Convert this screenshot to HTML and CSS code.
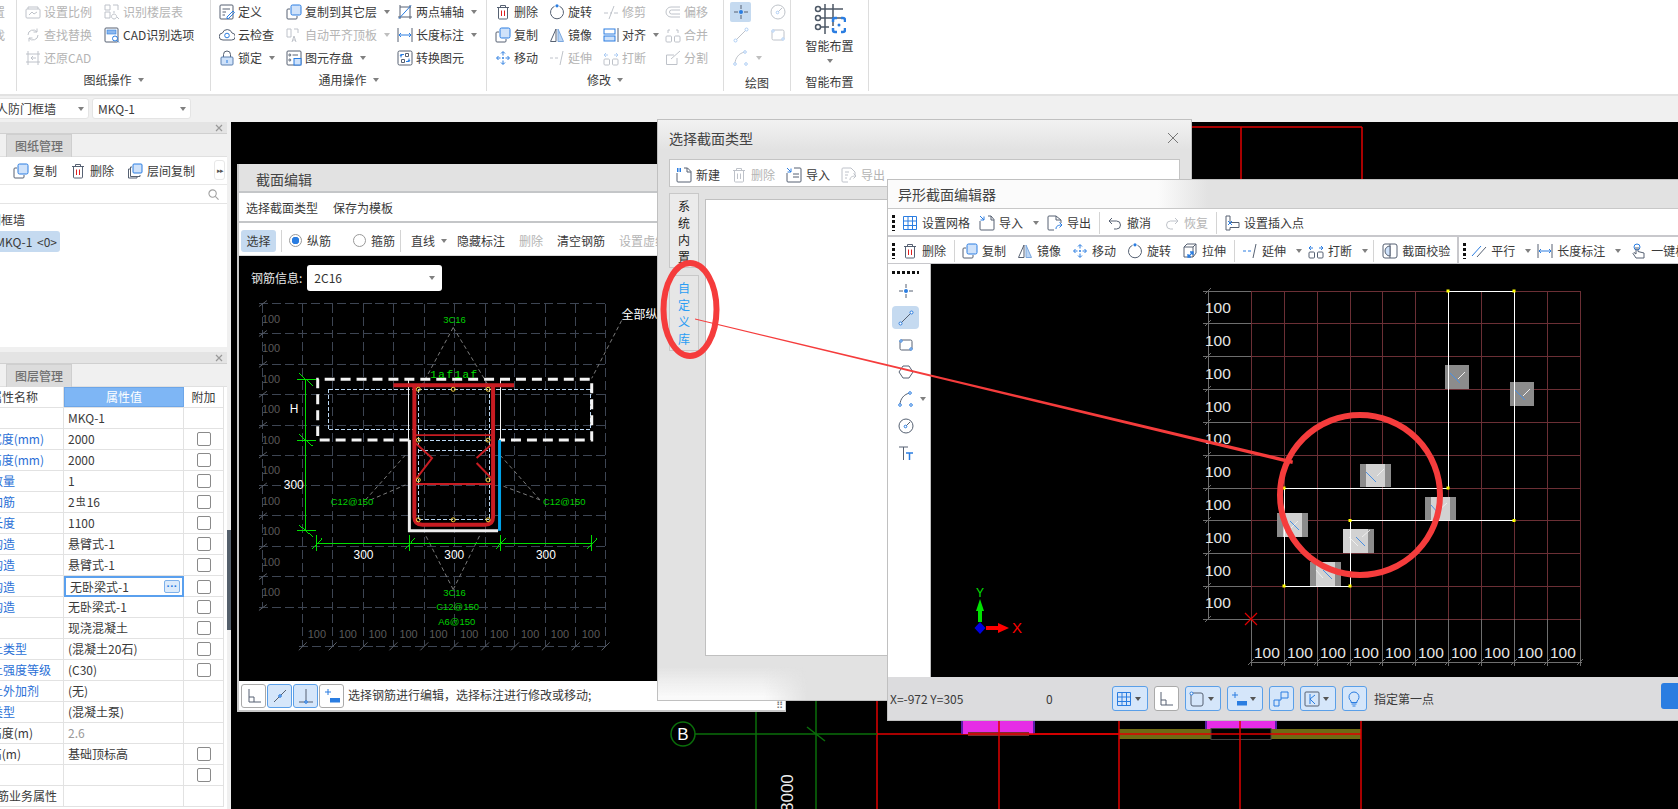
FILE: index.html
```html
<!DOCTYPE html>
<html lang="zh-CN">
<head>
<meta charset="utf-8">
<title>截面编辑</title>
<link rel="stylesheet" href="styles.css">
</head>
<body>
<svg class="defs" width="0" height="0">
  <symbol id="trash" viewBox="0 0 16 16"><path d="M2 3.5h12M5.5 3.5V1.5h5v2M3.5 3.5v10.5a1 1 0 0 0 1 1h7a1 1 0 0 0 1-1V3.500"/><path d="M6.500 6.500v5.500M9.500 6.500v5.500" stroke="#e02020"/></symbol>
  <symbol id="trash-off" viewBox="0 0 16 16"><path d="M2 3.5h12M5.5 3.5V1.5h5v2M3.5 3.5v10.5a1 1 0 0 0 1 1h7a1 1 0 0 0 1-1V3.500M6.500 6.500v5.500M9.500 6.500v5.500"/></symbol>
  <symbol id="copy" viewBox="0 0 16 16"><path d="M4 5H2a1 1 0 0 0-1 1v8a1 1 0 0 0 1 1h8a1 1 0 0 0 1-1v-2"/><rect x="5" y="1" width="10" height="10" rx="1.500" fill="#cfe2fa" stroke="#2a7de1"/></symbol>
  <symbol id="copy2" viewBox="0 0 16 16"><path d="M3 6H1.500v9h8.500v-1.500M5 4H3.500v9.500H13V12"/><rect x="6" y="1" width="9" height="9" rx="1" fill="#cfe2fa" stroke="#2a7de1"/></symbol>
  <symbol id="mirror" viewBox="0 0 16 16"><path d="M7 2 1.500 14.500H7z"/><path d="M9 2l5.500 12.500H9z" fill="#bcd6f5" stroke="#7ba7de"/></symbol>
  <symbol id="move" viewBox="0 0 16 16"><path stroke="#2a7de1" d="M8 2v3.500M8 10.500V14M2 8h3.500M10.500 8H14M6 3.500 8 1.500l2 2M6 12.500l2 2 2-2M3.500 6l-2 2 2 2M12.500 6l2 2-2 2"/><circle cx="8" cy="8" r="1" fill="#2a7de1" stroke="none"/></symbol>
  <symbol id="rot" viewBox="0 0 16 16"><path d="M10.500 2.300a6.500 6.500 0 1 1-5 0"/><circle cx="8" cy="1.800" r="1.600" fill="#2a7de1" stroke="none"/></symbol>
  <symbol id="trim" viewBox="0 0 16 16"><path d="M1 9h4M7 9h2M11 9h4M11 2 6 15"/></symbol>
  <symbol id="offset" viewBox="0 0 16 16"><path d="M15 3H6a5 5 0 0 0 0 10h9M15 6H6.500a2 2 0 0 0 0 4H15"/></symbol>
  <symbol id="align" viewBox="0 0 16 16"><path d="M15 1v14"/><rect x="1" y="2" width="11" height="5" fill="#fff" stroke="#2a7de1"/><rect x="1" y="9" width="11" height="5" fill="#cfe2fa" stroke="#2a7de1"/></symbol>
  <symbol id="merge" viewBox="0 0 16 16"><rect x="1" y="9" width="5.500" height="6" rx="1"/><rect x="9.500" y="9" width="5.500" height="6" rx="1"/><path d="M3 6V3h2M13 6V3h-2"/></symbol>
  <symbol id="extend" viewBox="0 0 16 16"><path d="M14 1l-3 14" stroke="#566172"/><path d="M1 8h3M6 8h3" stroke="#2a7de1"/></symbol>
  <symbol id="extend-off" viewBox="0 0 16 16"><path d="M1 8h3M6 8h3M14 1l-3 14"/></symbol>
  <symbol id="brk" viewBox="0 0 16 16"><rect x="1" y="9" width="5.500" height="6" rx="1"/><rect x="9.500" y="9" width="5.500" height="6" rx="1"/><path stroke="#2a7de1" d="M1 5h4M3 3 1 5l2 2M15 5h-4M13 3l2 2-2 2"/></symbol>
  <symbol id="split" viewBox="0 0 16 16"><path d="M12 8v6.500H1.500V5H9M15 1 6 9"/></symbol>
  <symbol id="def" viewBox="0 0 16 16"><rect x="1" y="1" width="13" height="14" rx="1"/><path d="M3.500 5H11M3.500 8H7M3.500 11H6"/><path stroke="#2a7de1" d="M8 13l6-6 1.500 1.500-6 6H8z"/></symbol>
  <symbol id="cloud" viewBox="0 0 16 16"><path d="M4 13a3.500 3.500 0 0 1-.5-7A5 5 0 0 1 13 6a3.500 3.500 0 0 1-.500 7z"/><circle cx="8" cy="8.500" r="2.300" stroke="#2a7de1"/></symbol>
  <symbol id="lock" viewBox="0 0 16 16"><path d="M4.500 7V4.500a3.500 3.500 0 0 1 7 0V7"/><rect x="2" y="7" width="12" height="8" rx="1" fill="#cfe2fa" stroke="#5a7fae"/><path stroke="#2a7de1" d="M8 10v3"/></symbol>
  <symbol id="autoalign" viewBox="0 0 16 16"><path d="M1 2h4v8H1zM8 2h4v4"/><path d="M6 15l2-6 2 6M7 13h2"/></symbol>
  <symbol id="save" viewBox="0 0 16 16"><rect x="1" y="1" width="14" height="14" rx="1"/><circle cx="3.800" cy="5" r="1"/><circle cx="3.800" cy="10" r="1"/><path d="M6.500 5H12"/><rect x="8" y="8.500" width="7" height="6.500" fill="#cfe2fa" stroke="#2a7de1"/></symbol>
  <symbol id="axis" viewBox="0 0 16 16"><path d="M3 3h11M3 1v14M13 1v14M1 13h14"/><path stroke="#2a7de1" d="M2 14.500 14 1.500"/></symbol>
  <symbol id="dim" viewBox="0 0 16 16"><path d="M1 1v14M15 1v14"/><path stroke="#2a7de1" d="M2 8h12M4 6 2 8l2 2M12 6l2 2-2 2"/></symbol>
  <symbol id="conv" viewBox="0 0 16 16"><rect x="1" y="1" width="14" height="14" rx="1.500"/><path stroke="#2a7de1" d="M7 4.500H4v3M9 11.500h3v-3M3 6l1-1.500L5 6M11 10l1 1.500 1-1.500"/><path d="M8.500 3.500h3v3h-3zM4.500 9.500h3v3h-3z"/></symbol>
  <symbol id="scale" viewBox="0 0 16 16"><rect x="1" y="5" width="14" height="9" rx="1"/><path d="M3 5V3M13 5V3M3 3h10M4 11l3-3 2 2 3-2"/></symbol>
  <symbol id="floor" viewBox="0 0 16 16"><path d="M1 1h5v5H1zM9 1h5v5M1 8h5v6H1zM9 8h2M10 10a2.500 2.500 0 1 0 .1 0M13 13l2 2"/></symbol>
  <symbol id="find" viewBox="0 0 16 16"><path d="M3 8a5 5 0 0 1 9-3M13 8a5 5 0 0 1-9 3M12 1.500V5H8.500M4 14.500V11h3.500"/></symbol>
  <symbol id="cadopt" viewBox="0 0 16 16"><rect x="1" y="1" width="13" height="14" rx="1"/><rect x="3" y="3" width="9" height="4" fill="#8cb8ee" stroke="#2a7de1" stroke-width=".6"/><circle cx="11" cy="11.500" r="2.500" stroke="#2a7de1"/><path stroke="#2a7de1" d="M13 13.500l2 2"/></symbol>
  <symbol id="restore" viewBox="0 0 16 16"><path d="M1 4h14M1 12h14M3 1v14M13 1v14M11 8H6M8 6 6 8l2 2"/></symbol>
  <symbol id="newdoc" viewBox="0 0 16 16"><path d="M8 1h3.500L15 4.500V14a1 1 0 0 1-1 1H2a1 1 0 0 1-1-1V6"/><path d="M11 1v4h4"/><path stroke="#2a7de1" stroke-dasharray="1.500 1" stroke-width="4" d="M1 3h4"/></symbol>
  <symbol id="import" viewBox="0 0 16 16"><path d="M1 6v8a1 1 0 0 0 1 1h12a1 1 0 0 0 1-1V2a1 1 0 0 0-1-1H8M7 7h6M7 10h6"/><path stroke="#2a7de1" d="M1 1l4 4M5 1.500V5H1.500"/></symbol>
  <symbol id="export" viewBox="0 0 16 16"><path d="M7 15H2a1 1 0 0 1-1-1V2a1 1 0 0 1 1-1h8l4 4v3"/><path d="M4 5h4M4 8h3M4 11h2"/><path d="M9 13c0-3 2-4 6-4M12.500 6.500 15 9l-2.500 2.500"/></symbol>
  <symbol id="grid" viewBox="0 0 16 16"><path stroke="#2a7de1" d="M1.500 1.500h13v13h-13zM1.500 6h13M1.500 10.500h13M6 1.500v13M10.500 1.500v13"/></symbol>
  <symbol id="imp2" viewBox="0 0 16 16"><path d="M9 1h3l3 3.500V14a1 1 0 0 1-1 1H2a1 1 0 0 1-1-1V6M12 1v4h3"/><path stroke="#2a7de1" d="M1 1l4 4M5 1.500V5H1.500"/></symbol>
  <symbol id="exp2" viewBox="0 0 16 16"><path d="M7 15H2a1 1 0 0 1-1-1V2a1 1 0 0 1 1-1h7l5 4v3M9 1v4h5"/><path stroke="#2a7de1" d="M9 14c0-3 2-4 6-4M12.500 7.500 15 10l-2.500 2.500"/></symbol>
  <symbol id="undo" viewBox="0 0 16 16"><path d="M5 3 2 6l3 3M2 6h7.500a4 4 0 0 1 0 8H7"/></symbol>
  <symbol id="redo" viewBox="0 0 16 16"><path d="M11 3l3 3-3 3M14 6H6.500a4 4 0 0 0 0 8H9"/></symbol>
  <symbol id="insert" viewBox="0 0 16 16"><path d="M2 1h4v6.500h9v5H6V15H2z"/><path stroke="#2a7de1" d="M4 6l4 4M8 6l-4 4"/></symbol>
  <symbol id="stretch" viewBox="0 0 16 16"><path d="M2 4h9v10H2zM2 4l3-3h9v9l-3 4M11 4l3-3"/><path stroke="#2a7de1" stroke-width="1.300" d="M6 14l5-5M6 11v3h3M11 12V9H8"/></symbol>
  <symbol id="check" viewBox="0 0 16 16"><rect x="1" y="1" width="14" height="14" rx="2"/><path d="M8 1v14"/><path fill="#cfe2fa" d="M8 3a5 5 0 0 0 0 10z"/></symbol>
  <symbol id="para" viewBox="0 0 16 16"><path stroke="#2a7de1" d="M1 13 10 3"/><path d="M6 14l9-10"/></symbol>
  <symbol id="onekey" viewBox="0 0 16 16"><circle cx="6" cy="4" r="3" stroke="#2a7de1"/><path d="M5 4v7l-2-1.500-1 1L5 15h8v-5l-6-1.500V4"/></symbol>
  <symbol id="pt" viewBox="0 0 16 16"><path d="M8 1v4M8 11v4M1 8h4M11 8h4"/><circle cx="8" cy="8" r="2" fill="#2a7de1" stroke="none"/></symbol>
  <symbol id="ln" viewBox="0 0 16 16"><path d="M3 13 13 3"/><circle cx="2.500" cy="13.500" r="1.500" fill="#fff" stroke="#2a7de1"/><circle cx="13.500" cy="2.500" r="1.500" fill="#fff" stroke="#2a7de1"/></symbol>
  <symbol id="rc" viewBox="0 0 16 16"><rect x="2" y="3" width="12" height="10" rx="1.500"/><circle cx="3" cy="4" r="1.200" fill="#fff" stroke="#2a7de1"/><circle cx="13" cy="12" r="1.200" fill="#fff" stroke="#2a7de1"/></symbol>
  <symbol id="hex" viewBox="0 0 16 16"><path d="M5 2h6l4 6-4 6H5L1 8z"/></symbol>
  <symbol id="arc" viewBox="0 0 16 16"><path d="M2 14C2 8 6 3 12 2"/><circle cx="2" cy="14" r="1.300" fill="#fff" stroke="#2a7de1"/><circle cx="12" cy="2" r="1.300" fill="#fff" stroke="#2a7de1"/><circle cx="13" cy="14" r="1.300" fill="#fff" stroke="#2a7de1"/></symbol>
  <symbol id="circ" viewBox="0 0 16 16"><circle cx="8" cy="8" r="7"/><path d="M8 8l4-4"/><circle cx="7.500" cy="8.500" r="1.300" fill="#fff" stroke="#2a7de1"/></symbol>
  <symbol id="tt" viewBox="0 0 16 16"><path d="M1 2h9M5.500 2v13"/><path stroke="#2a7de1" stroke-width="1.500" d="M8 8h7M11.500 8v7"/></symbol>
  <symbol id="corner" viewBox="0 0 16 16"><path d="M3 1v13h12M3 9h5v5"/></symbol>
  <symbol id="slant" viewBox="0 0 16 16"><path d="M2 14 14 2"/><circle cx="8" cy="8" r="1.300" fill="#8cb8ee" stroke="#2a7de1"/></symbol>
  <symbol id="perp" viewBox="0 0 16 16"><path d="M8 1v13M1 14h14"/><circle cx="8" cy="14" r="1.300" fill="#8cb8ee" stroke="#2a7de1"/></symbol>
  <symbol id="plusbar" viewBox="0 0 16 16"><path stroke="#2a7de1" d="M1 4h6M4 1v6"/><rect x="6" y="10" width="10" height="4.500" fill="#2a7de1" stroke="none"/></symbol>
  <symbol id="rectbtn" viewBox="0 0 16 16"><rect x="2" y="2" width="12" height="13" rx="2"/><circle cx="2.500" cy="2.500" r="1.500" fill="#fff" stroke="#2a7de1"/></symbol>
  <symbol id="steps" viewBox="0 0 16 16"><path stroke="#2a7de1" d="M1 9h5v6H1zM8 1h7v6H8zM6 9h2V7"/></symbol>
  <symbol id="boxk" viewBox="0 0 16 16"><rect x="1" y="1" width="14" height="14" rx="1"/><path stroke="#2a7de1" d="M6 3v10M6 8l5-4M6 8l5 5"/></symbol>
  <symbol id="bulb" viewBox="0 0 16 16"><path stroke="#2a7de1" d="M5 10a5 5 0 1 1 6 0v1.500H5zM5.500 13h5M6.500 15h3"/></symbol>
</svg>

<div class="app">
  <header class="ribbon">
    <section class="group g0">
      <div class="stub off">设置</div>
      <div class="stub off">查找</div>
    </section>
    <section class="group gp1">
      <div class="rows">
        <div class="ri off"><svg class="ic"><use href="#scale"/></svg>设置比例</div>
        <div class="ri off"><svg class="ic"><use href="#floor"/></svg>识别楼层表</div>
        <div class="ri off"><svg class="ic"><use href="#find"/></svg>查找替换</div>
        <div class="ri"><svg class="ic"><use href="#cadopt"/></svg>CAD识别选项</div>
        <div class="ri off"><svg class="ic"><use href="#restore"/></svg>还原CAD</div>
      </div>
      <div class="glabel">图纸操作<i class="caret"></i></div>
    </section>
    <section class="group gp2">
      <div class="rows">
        <div class="ri"><svg class="ic"><use href="#def"/></svg>定义</div>
        <div class="ri"><svg class="ic"><use href="#copy"/></svg>复制到其它层<i class="caret"></i></div>
        <div class="ri"><svg class="ic"><use href="#axis"/></svg>两点辅轴<i class="caret"></i></div>
        <div class="ri"><svg class="ic"><use href="#cloud"/></svg>云检查</div>
        <div class="ri off"><svg class="ic"><use href="#autoalign"/></svg>自动平齐顶板<i class="caret"></i></div>
        <div class="ri"><svg class="ic"><use href="#dim"/></svg>长度标注<i class="caret"></i></div>
        <div class="ri"><svg class="ic"><use href="#lock"/></svg>锁定<i class="caret"></i></div>
        <div class="ri"><svg class="ic"><use href="#save"/></svg>图元存盘<i class="caret"></i></div>
        <div class="ri"><svg class="ic"><use href="#conv"/></svg>转换图元</div>
      </div>
      <div class="glabel">通用操作<i class="caret"></i></div>
    </section>
    <section class="group gp3">
      <div class="rows">
        <div class="ri"><svg class="ic"><use href="#trash"/></svg>删除</div>
        <div class="ri"><svg class="ic"><use href="#rot"/></svg>旋转</div>
        <div class="ri off"><svg class="ic"><use href="#trim"/></svg>修剪</div>
        <div class="ri off"><svg class="ic"><use href="#offset"/></svg>偏移</div>
        <div class="ri"><svg class="ic"><use href="#copy"/></svg>复制</div>
        <div class="ri"><svg class="ic"><use href="#mirror"/></svg>镜像</div>
        <div class="ri"><svg class="ic"><use href="#align"/></svg>对齐<i class="caret"></i></div>
        <div class="ri off"><svg class="ic"><use href="#merge"/></svg>合并</div>
        <div class="ri"><svg class="ic"><use href="#move"/></svg>移动</div>
        <div class="ri off"><svg class="ic"><use href="#extend-off"/></svg>延伸</div>
        <div class="ri off"><svg class="ic"><use href="#brk"/></svg>打断</div>
        <div class="ri off"><svg class="ic"><use href="#split"/></svg>分割</div>
      </div>
      <div class="glabel">修改<i class="caret"></i></div>
    </section>
    <section class="group gp4">
      <div class="rows">
        <div class="dbtn on"><svg class="ic"><use href="#pt"/></svg></div>
        <div class="dbtn off"><svg class="ic"><use href="#circ"/></svg></div>
        <div class="dbtn off"><svg class="ic"><use href="#ln"/></svg></div>
        <div class="dbtn off"><svg class="ic"><use href="#rc"/></svg></div>
        <div class="dbtn off"><svg class="ic"><use href="#arc"/></svg><i class="caret"></i></div>
      </div>
      <div class="glabel g-low">绘图</div>
    </section>
    <section class="group gp5">
      <div class="smart">
        <svg class="smart-ic" viewBox="0 0 32 32"><path d="M11 1v30M19 1v22M1 6h28M1 15h28M1 24h14"/><circle cx="4" cy="6" r="2.500" fill="#fff"/><circle cx="4" cy="15" r="2.500" fill="#fff"/><circle cx="4" cy="24" r="2.500" fill="#fff"/><path stroke="#2a7de1" stroke-width="2.500" d="M19 19v-2a2 2 0 0 1 2-2h2M27 15h2a2 2 0 0 1 2 2v2M31 25v2a2 2 0 0 1-2 2h-2M23 29h-2a2 2 0 0 1-2-2v-2"/><circle cx="25" cy="22" r="1.500" fill="#2a7de1" stroke="none"/></svg>
        <span>智能布置</span>
        <i class="caret"></i>
      </div>
      <div class="glabel g-low">智能布置</div>
    </section>
  </header>

  <div class="bar">
    <div class="combo c1"><span>人防门框墙</span><i class="caret"></i></div>
    <div class="combo c2"><span>MKQ-1</span><i class="caret"></i></div>
  </div>

  <main class="main">
    <aside class="side">
      <div class="panel p1">
        <div class="ptitle"><svg class="x" viewBox="0 0 8 8"><path d="M1 1l6 6M7 1 1 7"/></svg></div>
        <div class="tabs"><span class="tab">图纸管理</span></div>
        <div class="ptools">
          <span class="pt"><svg class="ic"><use href="#copy"/></svg>复制</span>
          <span class="pt"><svg class="ic"><use href="#trash"/></svg>删除</span>
          <span class="pt"><svg class="ic"><use href="#copy2"/></svg>层间复制</span>
          <span class="more">▸▸</span>
        </div>
        <div class="search"><svg class="mag" viewBox="0 0 12 12"><circle cx="5" cy="5" r="4"/><path d="M8 8l3.500 3.500"/></svg></div>
        <div class="tree">
          <div class="t1"><span>人防门框墙</span></div>
          <div class="t2"><span>MKQ-1 &lt;0&gt;</span></div>
        </div>
      </div>
      <div class="panel p2">
        <div class="ptitle"><svg class="x" viewBox="0 0 8 8"><path d="M1 1l6 6M7 1 1 7"/></svg></div>
        <div class="tabs"><span class="tab">图层管理</span></div>
        <div class="props">
          <div class="row head"><div class="n"><span class="e38">属性名称</span></div><div class="v">属性值</div><div class="a">附加</div></div>
          <div class="row"><div class="n"></div><div class="v">MKQ-1</div><div class="a"></div></div>
          <div class="row"><div class="n link"><span class="e44">洞口宽度(mm)</span></div><div class="v">2000</div><div class="a"><i class="cb"></i></div></div>
          <div class="row"><div class="n link"><span class="e44">洞口高度(mm)</span></div><div class="v">2000</div><div class="a"><i class="cb"></i></div></div>
          <div class="row"><div class="n link"><span class="e15">数量</span></div><div class="v">1</div><div class="a"><i class="cb"></i></div></div>
          <div class="row"><div class="n link"><span class="e15">加筋</span></div><div class="v">2<small class="steel">虫</small>16</div><div class="a"><i class="cb"></i></div></div>
          <div class="row"><div class="n link"><span class="e15">长度</span></div><div class="v">1100</div><div class="a"><i class="cb"></i></div></div>
          <div class="row"><div class="n link"><span class="e15">构造</span></div><div class="v">悬臂式-1</div><div class="a"><i class="cb"></i></div></div>
          <div class="row"><div class="n link"><span class="e15">构造</span></div><div class="v">悬臂式-1</div><div class="a"><i class="cb"></i></div></div>
          <div class="row"><div class="n link"><span class="e15">构造</span></div><div class="v edit"><span>无卧梁式-1</span><b class="dots">···</b></div><div class="a"><i class="cb"></i></div></div>
          <div class="row"><div class="n link"><span class="e15">构造</span></div><div class="v">无卧梁式-1</div><div class="a"><i class="cb"></i></div></div>
          <div class="row"><div class="n"></div><div class="v">现浇混凝土</div><div class="a"><i class="cb"></i></div></div>
          <div class="row"><div class="n link"><span class="e27">混凝土类型</span></div><div class="v">(混凝土20石)</div><div class="a"><i class="cb"></i></div></div>
          <div class="row"><div class="n link"><span class="e51">混凝土强度等级</span></div><div class="v">(C30)</div><div class="a"><i class="cb"></i></div></div>
          <div class="row"><div class="n link"><span class="e39">混凝土外加剂</span></div><div class="v">(无)</div><div class="a"></div></div>
          <div class="row"><div class="n link"><span class="e15">泵送类型</span></div><div class="v">(混凝土泵)</div><div class="a"></div></div>
          <div class="row"><div class="n"><span class="e33">泵送高度(m)</span></div><div class="v gray">2.6</div><div class="a"></div></div>
          <div class="row"><div class="n"><span class="e21">底标高(m)</span></div><div class="v">基础顶标高</div><div class="a"><i class="cb"></i></div></div>
          <div class="row"><div class="n"></div><div class="v"></div><div class="a"><i class="cb"></i></div></div>
          <div class="row"><div class="n"><span class="e57">钢筋业务属性</span></div><div class="v"></div><div class="a"></div></div>
        </div>
      </div>
    </aside>
    <div class="split"></div>
    <div class="cad">
      <svg class="cad-svg" viewBox="231 122 1447 687">
        <path class="r" d="M1191 127H1362M1241 127V179M1362 127V179M877 700V809M877 734H1361"/>
        <path class="g" d="M695 734H877M756 712V809M816 700V809"/>
        <path class="gt2" d="M807 727l18 14"/>
        <circle class="gc" cx="683" cy="734" r="12"/>
        <text class="cad-b" x="683" y="740">B</text>
        <text class="cad-n" transform="translate(793 812) rotate(-90)">8000</text>
        <rect x="962" y="721" width="72" height="13" fill="#e62ce6"/>
        <path d="M962 721v13M1034 721v13" stroke="#5a1ea8" stroke-width="2"/>
        <rect x="1206" y="721" width="70" height="8" fill="#e62ce6"/>
        <path d="M1206 721v8M1276 721v8" stroke="#5a1ea8" stroke-width="2"/>
        <rect x="968" y="732" width="61" height="4" fill="#7a3030"/>
        <rect x="1119" y="729" width="92" height="10" fill="#6e6a14"/>
        <rect x="1271" y="729" width="90" height="10" fill="#6e6a14"/>
        <rect x="1211" y="728.500" width="60" height="11" fill="#000" stroke="#444"/>
        <path class="r" d="M968 734H1361M999 721V809M1119 721V809M1240 721V809M1361 721V809"/>
      </svg>
    </div>
  </main>
</div>

<section class="win w1">
  <div class="wtitle">截面编辑</div>
  <div class="wmenu"><span>选择截面类型</span><span>保存为模板</span></div>
  <div class="wtools">
    <span class="sel">选择</span><i class="vs"></i>
    <span class="radio on"></span><span class="rt">纵筋</span>
    <span class="radio"></span><span class="rt last">箍筋</span><i class="vs"></i>
    <span class="ft ml">直线<i class="caret"></i></span>
    <span class="ft">隐藏标注</span>
    <span class="ft dis">删除</span>
    <span class="ft">清空钢筋</span>
    <span class="ft dis">设置虚线</span>
  </div>
  <div class="canvas1">
    <svg class="fill" viewBox="238 256 548 425">
      <path class="gl" d="M302 303V647M332 303V647M363 303V647M393 303V647M424 303V647M454 303V647M485 303V647M515 303V647M546 303V647M576 303V647M606 303V647M258 303H606M258 333H606M258 364H606M258 394H606M258 425H606M258 455H606M258 486H606M258 516H606M258 547H606M258 577H606M258 608H606M262 303V608M298 647H608"/>
      <path class="gls" d="M258 306l8-6M258 336l8-6M258 367l8-6M258 397l8-6M258 428l8-6M258 458l8-6M258 489l8-6M258 519l8-6M258 550l8-6M258 580l8-6M258 611l8-6M298 651l8-8M328 651l8-8M359 651l8-8M389 651l8-8M420 651l8-8M450 651l8-8M481 651l8-8M511 651l8-8M542 651l8-8M572 651l8-8M602 651l8-8"/>
      <g class="lbl1">
        <text x="261" y="322">100</text><text x="261" y="352">100</text><text x="261" y="383">100</text><text x="261" y="413">100</text><text x="261" y="444">100</text><text x="261" y="474">100</text><text x="261" y="505">100</text><text x="261" y="535">100</text><text x="261" y="566">100</text><text x="261" y="596">100</text>
        <text x="307" y="639">100</text><text x="338" y="639">100</text><text x="368" y="639">100</text><text x="399" y="639">100</text><text x="429" y="639">100</text><text x="460" y="639">100</text><text x="490" y="639">100</text><text x="521" y="639">100</text><text x="551" y="639">100</text><text x="582" y="639">100</text>
      </g>
      <path class="lead" d="M453 327 420 388M453 327 490 388M622 320 592 378M365 500 405 455M370 500 405 485M540 500 500 455M540 500 500 485M453 590 425 535M453 590 480 535"/>
      <path class="pale" d="M328 389H591M328 429H591V389M328 389V429M418 389V520H489V389M418 440H489M418 450H489"/>
      <path class="wd" d="M409 440H317V379H592V440H499"/>
      <path class="wt" d="M408 379V440M500 379V440"/>
      <path class="ws" d="M409 440V531H498"/>
      <path class="bl" d="M499.500 440V531"/>
      <path class="rb" d="M393 385H514M414 385V517q0 8 8 8H485q8 0 8-8V385"/>
      <path class="rt1" d="M415 435H492M415 484H492M415 443 431.700 458 415 480M493 443 476.500 458M476.500 463 493 480"/>
      <g class="yd">
        <circle cx="418" cy="389" r="2"/><circle cx="453" cy="389" r="2"/><circle cx="488" cy="389" r="2"/><circle cx="418" cy="440" r="2"/><circle cx="488" cy="440" r="2"/><circle cx="418" cy="480" r="2"/><circle cx="488" cy="480" r="2"/><circle cx="418" cy="520" r="2"/><circle cx="453" cy="520" r="2"/><circle cx="488" cy="520" r="2"/>
      </g>
      <path class="gd" d="M304.500 379V531M316 543.500H592M296 379H315M296 440H315M296 531H315M298 373l14 12M298 434l14 12M298 525l14 12M316 535v16M409 535v16M500 535v16M592 535v16M312 549l10-11M405 549l10-11M496 549l10-11M588 549l10-11"/>
      <g class="wt-t">
        <text x="289" y="413">H</text><text x="283" y="489">300</text><text x="353" y="559">300</text><text x="444" y="559">300</text><text x="536" y="559">300</text>
      </g>
      <g class="gt">
        <text x="330" y="505">C12@150</text><text x="543" y="505">C12@150</text><text x="443" y="322">3C16</text><text x="443" y="596">3C16</text><text x="436" y="611">C12@150</text><text x="438" y="626">A6@150</text>
      </g>
      <text class="lf" x="430" y="378">1af1af</text>
      <text class="allz" x="622" y="318">全部纵筋</text>
    </svg>
    <div class="rebar"><label>钢筋信息:</label><div class="rsel"><span>2C16</span><i class="caret"></i></div></div>
  </div>
  <div class="wstatus">
    <span class="sb"><svg class="ic"><use href="#corner"/></svg></span>
    <span class="sb act"><svg class="ic"><use href="#slant"/></svg></span>
    <span class="sb act"><svg class="ic"><use href="#perp"/></svg></span>
    <span class="sb"><svg class="ic"><use href="#plusbar"/></svg></span>
    <span class="hint">选择钢筋进行编辑，选择标注进行修改或移动;</span>
  </div>
  <span class="rz">⠿</span>
</section>

<section class="win w2">
  <div class="w2title"><span>选择截面类型</span><svg class="x2" viewBox="0 0 12 12"><path d="M1 1l10 10M11 1 1 11"/></svg></div>
  <div class="w2tools">
    <span class="ti"><svg class="ic"><use href="#newdoc"/></svg>新建</span>
    <span class="ti off"><svg class="ic"><use href="#trash-off"/></svg>删除</span>
    <span class="ti"><svg class="ic"><use href="#import"/></svg>导入</span>
    <span class="ti off"><svg class="ic"><use href="#export"/></svg>导出</span>
  </div>
  <div class="w2body">
    <div class="libs">
      <div class="lib">系统内置</div>
      <div class="lib cur">自定义库</div>
    </div>
    <div class="list"></div>
  </div>
</section>

<section class="win w3">
  <div class="w3title">异形截面编辑器</div>
  <div class="w3bar">
    <i class="grip"></i>
    <span class="ti m9"><svg class="ic"><use href="#grid"/></svg>设置网格</span>
    <span class="ti m8"><svg class="ic"><use href="#imp2"/></svg>导入<i class="caret"></i></span>
    <span class="ti"><svg class="ic"><use href="#exp2"/></svg>导出</span><i class="vs"></i>
    <span class="ti m13"><svg class="ic"><use href="#undo"/></svg>撤消</span>
    <span class="ti off"><svg class="ic"><use href="#redo"/></svg>恢复</span><i class="vs"></i>
    <span class="ti"><svg class="ic"><use href="#insert"/></svg>设置插入点</span>
  </div>
  <div class="w3bar b2">
    <i class="grip"></i>
    <span class="ti"><svg class="ic"><use href="#trash"/></svg>删除</span><i class="vs"></i>
    <span class="ti"><svg class="ic"><use href="#copy"/></svg>复制</span>
    <span class="ti"><svg class="ic"><use href="#mirror"/></svg>镜像</span>
    <span class="ti"><svg class="ic"><use href="#move"/></svg>移动</span>
    <span class="ti"><svg class="ic"><use href="#rot"/></svg>旋转</span>
    <span class="ti"><svg class="ic"><use href="#stretch"/></svg>拉伸</span><i class="vs"></i>
    <span class="ti m6"><svg class="ic"><use href="#extend"/></svg>延伸<i class="caret"></i></span>
    <span class="ti m6"><svg class="ic"><use href="#brk"/></svg>打断<i class="caret"></i></span><i class="vs wide"></i>
    <span class="ti"><svg class="ic"><use href="#check"/></svg>截面校验</span>
    <i class="thick"></i><i class="grip"></i>
    <span class="ti m6"><svg class="ic"><use href="#para"/></svg>平行<i class="caret"></i></span>
    <span class="ti m10"><svg class="ic"><use href="#dim"/></svg>长度标注<i class="caret"></i></span>
    <span class="ti"><svg class="ic"><use href="#onekey"/></svg>一键标注</span>
  </div>
  <div class="w3main">
    <div class="vtools">
      <i class="hgrip"></i>
      <span class="vt"><svg class="ic"><use href="#pt"/></svg></span>
      <span class="vt on"><svg class="ic"><use href="#ln"/></svg></span>
      <span class="vt"><svg class="ic"><use href="#rc"/></svg></span>
      <span class="vt"><svg class="ic"><use href="#hex"/></svg></span>
      <span class="vt"><svg class="ic"><use href="#arc"/></svg><i class="caret abs"></i></span>
      <span class="vt"><svg class="ic"><use href="#circ"/></svg></span>
      <span class="vt"><svg class="ic"><use href="#tt"/></svg></span>
    </div>
    <div class="canvas3">
      <svg class="fill" viewBox="931 264 747 413">
        <path class="gr" d="M1251 291V619M1284 291V619M1317 291V619M1350 291V619M1382 291V619M1415 291V619M1448 291V619M1481 291V619M1514 291V619M1547 291V619M1580 291V619M1251 291H1580M1251 323H1580M1251 356H1580M1251 389H1580M1251 422H1580M1251 455H1580M1251 488H1580M1251 520H1580M1251 553H1580M1251 586H1580M1251 619H1580"/>
        <path class="dm" d="M1208 291V619M1203 291H1251M1203 323H1251M1203 356H1251M1203 389H1251M1203 422H1251M1203 455H1251M1203 488H1251M1203 520H1251M1203 553H1251M1203 586H1251M1203 619H1251M1251 619V666M1284 619V666M1317 619V666M1350 619V666M1382 619V666M1415 619V666M1448 619V666M1481 619V666M1514 619V666M1547 619V666M1580 619V666M1251 662H1582"/>
        <path class="dmt" d="M1205 294l6-6M1205 326l6-6M1205 359l6-6M1205 392l6-6M1205 425l6-6M1205 458l6-6M1205 491l6-6M1205 523l6-6M1205 556l6-6M1205 589l6-6M1205 622l6-6M1248 665l6-6M1281 665l6-6M1314 665l6-6M1347 665l6-6M1379 665l6-6M1412 665l6-6M1445 665l6-6M1478 665l6-6M1511 665l6-6M1544 665l6-6M1577 665l6-6"/>
        <g class="lbl3">
          <text x="1205" y="313">100</text><text x="1205" y="346">100</text><text x="1205" y="379">100</text><text x="1205" y="412">100</text><text x="1205" y="444">100</text><text x="1205" y="477">100</text><text x="1205" y="510">100</text><text x="1205" y="543">100</text><text x="1205" y="576">100</text><text x="1205" y="608">100</text>
          <text x="1254" y="658">100</text><text x="1287" y="658">100</text><text x="1320" y="658">100</text><text x="1353" y="658">100</text><text x="1385" y="658">100</text><text x="1418" y="658">100</text><text x="1451" y="658">100</text><text x="1484" y="658">100</text><text x="1517" y="658">100</text><text x="1550" y="658">100</text>
        </g>
        <path class="rx" d="M1245 613l12 12M1257 613l-12 12"/>
        <g class="sq">
          <rect x="1445" y="365" width="24" height="24"/><rect x="1510" y="382" width="24" height="24"/>
          <rect x="1360" y="464" width="31" height="23"/><rect x="1425" y="497" width="31" height="23"/><rect x="1277" y="513" width="31" height="24"/><rect x="1343" y="529" width="31" height="24"/><rect x="1310" y="562" width="31" height="24"/>
        </g>
        <g class="sqi">
          <rect x="1366" y="464" width="19" height="23"/><rect x="1431" y="497" width="19" height="23"/><rect x="1283" y="513" width="19" height="24"/><rect x="1343" y="529" width="25" height="24"/><rect x="1316" y="562" width="19" height="24"/>
        </g>
        <path class="sb1" d="M1450 373l10 10M1515 390l10 10M1366 472l10 10M1431 505l8 9M1290 521l9 9M1356 537l9 9M1323 570l9 9"/>
        <path class="sw" d="M1458 379l7-7M1523 396l7-7M1377 476l7-7M1439 510l8-7M1298 521l-7 7M1362 537l8-7M1316 570l7 8M1349 537l9 9"/>
        <path class="pl" d="M1448 291H1514V520H1350V586H1284V488H1448Z"/>
        <g class="yl">
          <rect x="1446.500" y="289.500" width="3" height="3"/><rect x="1512.500" y="289.500" width="3" height="3"/><rect x="1512.500" y="519" width="3" height="3"/><rect x="1348.500" y="519" width="3" height="3"/><rect x="1348.500" y="584.500" width="3" height="3"/><rect x="1282.500" y="584.500" width="3" height="3"/><rect x="1282.500" y="486.500" width="3" height="3"/><rect x="1446.500" y="486.500" width="3" height="3"/>
        </g>
        <path d="M980 622V610" stroke="#00e000" stroke-width="4"/>
        <path d="M976 611h8l-4-12z" fill="#00e000"/>
        <path d="M986 628h13" stroke="#ff0000" stroke-width="4"/>
        <path d="M998 623v10l11-5z" fill="#ff0000"/>
        <path d="M980 622l5.500 6-5.500 6-5.500-6z" fill="#0000e0"/>
        <text class="axy" x="976" y="597">Y</text>
        <text class="axx" x="1012" y="633">X</text>
      </svg>
    </div>
  </div>
  <div class="w3status">
    <span class="coord">X=-972 Y=305</span><span class="zero">0</span>
    <span class="st w35"><svg class="ic"><use href="#grid"/></svg><i class="caret"></i></span>
    <span class="st w25 plain"><svg class="ic"><use href="#corner"/></svg></span>
    <span class="st w35"><svg class="ic"><use href="#rectbtn"/></svg><i class="caret"></i></span>
    <span class="st w35"><svg class="ic"><use href="#plusbar"/></svg><i class="caret"></i></span>
    <span class="st w25"><svg class="ic"><use href="#steps"/></svg></span>
    <span class="st w35"><svg class="ic"><use href="#boxk"/></svg><i class="caret"></i></span>
    <span class="st w25"><svg class="ic"><use href="#bulb"/></svg></span>
    <span class="tip">指定第一点</span>
    <span class="ok"></span>
  </div>
</section>

<svg class="mark" viewBox="0 0 1678 809">
  <ellipse cx="690" cy="309.500" rx="26.500" ry="46.500"/>
  <circle cx="1360" cy="495" r="80"/>
  <polygon points="695,318.500 1293,460.500 1292.400,464 695,319.500"/>
</svg>
</body>
</html>
```
FILE: styles.css
```css
* { box-sizing: border-box; }
html, body { margin: 0; padding: 0; }
body {
  width: 1678px; height: 809px; overflow: hidden; position: relative;
  font: 12px/16px "Noto Sans CJK SC", "Liberation Sans", sans-serif;
  color: #3a3a3a; background: #f0f0f0;
}
.defs { position: absolute; }
.ic { width: 16px; height: 16px; flex: none; fill: none; stroke: #566172; stroke-width: 1; }
.caret { display: inline-block; width: 0; height: 0; border: 3px solid transparent; border-top: 4px solid #808080; border-bottom: 0; margin-left: 6px; flex: none; }
.off { color: #b4b4b4; }
.off .ic { opacity: .38; }
.off .caret { opacity: .5; }

.app { display: flex; flex-direction: column; height: 809px; }
.ribbon { height: 96px; flex: none; display: flex; background: #fff; border-bottom: 2px solid #e2e2e2; }
.group { height: 91px; border-right: 1px solid #ddd; display: flex; flex-direction: column; flex: none; }
.g0 { width: 17px; overflow: hidden; }
.stub { height: 23px; display: flex; align-items: center; justify-content: flex-end; white-space: nowrap; padding-right: 11px; }
.gp1 { width: 194px; }
.gp2 { width: 276px; }
.gp3 { width: 237px; }
.gp4 { width: 67px; }
.gp5 { width: 78px; }
.rows { display: grid; grid-auto-rows: 23px; height: 69px; padding-left: 8px; }
.gp1 .rows { grid-template-columns: 79px 1fr; }
.gp2 .rows { grid-template-columns: 67px 111px 1fr; }
.gp3 .rows { grid-template-columns: 54px 54px 62px 1fr; }
.gp4 .rows { grid-template-columns: 33px 33px; padding-left: 6px; }
.ri { display: flex; align-items: center; gap: 3px; white-space: nowrap; }
.ri .caret { margin-left: 4px; }
.glabel { height: 22px; display: flex; align-items: center; justify-content: center; }
.g-low { margin-top: 5px; height: 19px; }
.dbtn { display: flex; align-items: center; justify-content: flex-start; padding-left: 3px; height: 20px; width: 21px; margin-top: 2px; border-radius: 2px; }
.dbtn.off:nth-child(even) { margin-left: 4px; }
.dbtn.on { background: #c5daf0; }
.dbtn .caret { margin-left: 7px; }
.smart { height: 69px; display: flex; flex-direction: column; align-items: center; padding-top: 3px; }
.smart span { margin-top: 3px; }
.smart .caret { margin: 5px 0 0; }
.smart-ic { width: 32px; height: 32px; fill: none; stroke: #4d5866; stroke-width: 1.500; }

.bar { height: 26px; flex: none; background: #f0f0f0; display: flex; align-items: flex-start; gap: 3px; padding-top: 2px; margin-left: -10px; }
.combo { height: 21px; background: #fff; border: 1px solid #e4e4e4; border-radius: 3px; display: flex; align-items: center; justify-content: space-between; padding: 0 4px 0 5px; }
.c1 { width: 99px; }
.c2 { width: 99px; }

.main { flex: 1; display: flex; min-height: 0; }
.side { width: 227px; flex: none; display: flex; flex-direction: column; gap: 5px; }
.split { width: 4px; flex: none; background: linear-gradient(#f0f0f0 408px, #55606c 408px, #55606c 508px, #f0f0f0 508px); }
.cad { flex: 1; background: #000; position: relative; overflow: hidden; }
.cad-svg { position: absolute; inset: 0; width: 100%; height: 100%; }
.cad-svg .r { stroke: #e00000; fill: none; stroke-width: 1.500; }
.cad-svg .g { stroke: #0a6e0a; fill: none; stroke-width: 1.500; }
.cad-svg .gt2, .cad-svg .gc { stroke: #0a6e0a; fill: none; stroke-width: 1.500; }
.cad-b { fill: #fff; font: 17px "Liberation Sans", sans-serif; text-anchor: middle; }
.cad-n { fill: #eee; font: 17px "Liberation Sans", sans-serif; }

.panel { background: #fff; display: flex; flex-direction: column; }
.p1 { height: 225px; }
.p2 { flex: 1; min-height: 0; overflow: hidden; }
.ptitle { height: 12px; background: #e4e4e4; flex: none; display: flex; justify-content: flex-end; align-items: center; padding-right: 4px; border-bottom: 1px solid #d0d0d0; }
.x { width: 8px; height: 8px; stroke: #999; fill: none; stroke-width: 1.200; }
.tabs { height: 23px; flex: none; background: #f0f0f0; padding-left: 6px; border-bottom: 1px solid #e0e0e0; }
.tab { display: inline-flex; align-items: center; justify-content: center; width: 66px; height: 23px; background: #dcdcdc; border: 1px solid #cfcfcf; border-bottom: 0; color: #707070; font-weight: 500; }
.ptools { height: 28px; flex: none; display: flex; align-items: center; padding: 1px 0 0 13px; border-bottom: 1px solid #e8e8e8; position: relative; }
.pt { display: flex; align-items: center; gap: 4px; margin-right: 13px; white-space: nowrap; }
.more { position: absolute; left: 214px; top: 3px; width: 11px; height: 20px; border: 1px solid #e8e8e8; border-radius: 3px; font-size: 7px; display: flex; align-items: center; justify-content: center; color: #555; letter-spacing: -1px; }
.search { height: 19px; flex: none; display: flex; align-items: center; justify-content: flex-end; padding-right: 8px; border-bottom: 1px solid #e4e4e4; }
.mag { width: 11px; height: 11px; fill: none; stroke: #a0a0a0; stroke-width: 1.200; }
.tree { flex: 1; }
.t1, .t2 { display: flex; justify-content: flex-end; white-space: nowrap; }
.t1 { width: 25px; height: 20px; margin-top: 6px; align-items: center; }
.t2 { width: 60px; height: 21px; margin-top: 1px; background: #c5daf0; border-radius: 0 3px 3px 0; align-items: center; padding-right: 3px; word-spacing: 2px; }

.props { display: flex; flex-direction: column; width: 224px; }
.row { display: grid; grid-template-columns: 64px 120px 40px; height: 21px; flex: none; border-bottom: 1px solid #e2e2e2; }
.row > div { border-right: 1px solid #e2e2e2; display: flex; align-items: center; }
.n { overflow: visible; }
.n span { display: flex; justify-content: flex-end; white-space: nowrap; }
.link { color: #2a6fd6; }
.e15 { width: 15px; } .e21 { width: 21px; } .e27 { width: 27px; } .e33 { width: 33px; } .e38 { width: 38px; }
.e39 { width: 39px; } .e44 { width: 44px; } .e51 { width: 51px; } .e57 { width: 57px; }
.row > .v { padding-left: 4px; white-space: nowrap; }
.row > .a { justify-content: center; }
.head { height: 21px; }
.row.head > .v { background: #7eb6f5; color: #fff; justify-content: center; padding: 0; border: 1px solid #6da6e8; }
.gray { color: #999; }
.steel { font-size: 10px; margin: 0 1px; position: relative; top: -1px; }
.cb { width: 14px; height: 14px; border: 1px solid #8a8a8a; border-radius: 2px; background: #fff; display: block; }
.row > .edit { border: 2px solid #5aa0ee; justify-content: space-between; padding: 0 2px 0 4px; height: 21px; }
.dots { width: 16px; height: 13px; background: #dcebfb; border: 1px solid #7eb1ea; border-radius: 2px; color: #2a7de1; display: flex; align-items: center; justify-content: center; font: bold 11px/1 "Liberation Sans", sans-serif; letter-spacing: 0; }

.win { position: absolute; display: flex; flex-direction: column; }
.fill { position: absolute; inset: 0; width: 100%; height: 100%; }

.w1 { left: 237px; top: 164px; width: 549px; height: 548px; background: #fdfdfd; border: 1px solid #c8c8c8; border-width: 0 1px 2px 2px; }
.wtitle { height: 27px; flex: none; background: #e2e2e2; font-size: 14px; line-height: 30px; padding-left: 17px; color: #444; }
.wmenu { height: 32px; flex: none; background: #fff; border: solid #c4c6c8; border-width: 2px 0; display: flex; align-items: center; gap: 15px; padding: 2px 0 0 7px; }
.wtools { height: 33px; flex: none; background: #fff; display: flex; align-items: center; padding: 3px 0 0 2px; border-bottom: 1px solid #ddd; white-space: nowrap; overflow: hidden; }
.sel { width: 35px; height: 22px; background: #c5daf0; border-radius: 3px; display: flex; align-items: center; justify-content: center; }
.vs { width: 1px; height: 22px; background: #d4d4d4; margin: 0 7px 0 5px; flex: none; }
.radio { width: 13px; height: 13px; border: 1px solid #999; border-radius: 50%; background: #fff; flex: none; display: block; }
.radio.on { background: radial-gradient(circle, #2a7de1 0 3.500px, #fff 4px); }
.rt { margin: 0 22px 0 5px; }
.rt.last { margin-right: 0; }
.ft { margin-right: 14px; display: inline-flex; align-items: center; }
.ft.ml { margin-left: 3px; margin-right: 10px; }
.ft.dis { color: #b4b4b4; }
.canvas1 { height: 425px; flex: none; background: #000; position: relative; overflow: hidden; }
.rebar { position: relative; display: flex; align-items: center; gap: 5px; padding: 9px 0 0 12px; color: #e8e8e8; }
.rsel { width: 135px; height: 26px; background: #fff; border-radius: 3px; color: #333; display: flex; align-items: center; justify-content: space-between; padding: 0 7px; }
.gl { stroke: #3d4553; fill: none; stroke-dasharray: 9 4; shape-rendering: crispEdges; }
.gls { stroke: #5a5f68; fill: none; }
.lbl1 text { fill: #5a5a5a; font: 11px "Liberation Sans", sans-serif; }
.lead { stroke: #7a7a7a; fill: none; stroke-dasharray: 4 3; }
.pale { stroke: #bcd8f4; fill: none; stroke-dasharray: 4 2; shape-rendering: crispEdges; }
.wd { stroke: #f4f4f4; fill: none; stroke-width: 3; stroke-dasharray: 10 6; }
.wt { stroke: #f4f4f4; fill: none; shape-rendering: crispEdges; }
.ws { stroke: #eee; fill: none; stroke-width: 3; }
.bl { stroke: #00a2e8; stroke-width: 3; fill: none; }
.rb { stroke: #c81c22; stroke-width: 4; fill: none; }
.rt1 { stroke: #c81c22; stroke-width: 2; fill: none; }
.yd circle { fill: none; stroke: #f0d040; }
.gd { stroke: #00e000; fill: none; shape-rendering: crispEdges; }
.wt-t text { fill: #fff; font: 12px "Liberation Sans", sans-serif; }
.gt text { fill: #00d000; font: 9.500px "Liberation Sans", sans-serif; }
.lf { fill: #00e000; font: 11px "Liberation Mono", monospace; letter-spacing: 1.500px; }
.allz { fill: #fff; font-size: 12px; }
.wstatus { flex: 1; background: #fff; display: flex; align-items: flex-start; padding: 3px 0 0 2px; gap: 1px; position: relative; }
.sb { width: 25px; height: 24px; border: 1px solid #aaa; border-radius: 3px; display: flex; align-items: center; justify-content: center; background: #fff; }
.sb.act { background: #d5e6fa; border-color: #5a9fe8; }
.hint { margin: 3px 0 0 3px; white-space: nowrap; }
.rz { position: absolute; right: 2px; bottom: 0; font-size: 10px; line-height: 10px; color: #777; }

.w2 { left: 657px; top: 119px; width: 535px; height: 582px; border: 1px solid #c0c0c0; background: linear-gradient(180deg, #f2f2f2 0, #e2e2e2 30px); padding: 0 11px; }
.w2::after { content: ""; position: absolute; left: 0; bottom: 0; width: 150px; height: 34px; background: linear-gradient(180deg, transparent, #fafafa 90%); -webkit-mask-image: linear-gradient(90deg, #000 105px, transparent); mask-image: linear-gradient(90deg, #000 105px, transparent); }
.w2title { height: 39px; flex: none; display: flex; align-items: center; justify-content: space-between; font-size: 14px; color: #444; padding-bottom: 3px; }
.x2 { width: 12px; height: 12px; stroke: #777; fill: none; margin-right: 1px; }
.w2tools { height: 28px; flex: none; background: #fff; border: 1px solid #c4c4c4; display: flex; align-items: center; padding: 3px 0 0 6px; }
.ti { display: flex; align-items: center; gap: 4px; margin-right: 11px; white-space: nowrap; flex: none; line-height: 18px; }
.w2body { display: flex; flex: none; gap: 6px; margin-top: 6px; align-items: flex-start; }
.libs { width: 30px; flex: none; display: flex; flex-direction: column; gap: 7px; }
.lib { height: 75px; background: #ebebeb; border: 1px solid #c8c8c8; width: 30px; padding: 3px 8px 0; line-height: 17px; color: #222; text-align: center; }
.lib.cur { color: #2a9df4; height: 76px; background: #e6e6e6; }
.list { width: 475px; height: 457px; margin-top: 6px; background: #fff; border: 1px solid #c0c0c0; }

.w3 { left: 887px; top: 179px; width: 791px; height: 542px; background: #fff; border: solid #c0c0c0; border-width: 1px 0 1px 1px; }
.w3title { height: 29px; flex: none; font-size: 14px; line-height: 28px; padding-left: 10px; color: #444; background: linear-gradient(90deg, #fbfbfb 270px, #e2e2e2 320px); border-bottom: 1px solid #c8c8c8; }
.w3bar { height: 28px; flex: none; background: #fff; display: flex; align-items: center; border-bottom: 2px solid #c8c8cc; white-space: nowrap; overflow: hidden; padding-top: 1px; }
.w3bar.b2 { height: 27px; border-bottom: 1px solid #c8c8cc; }
.grip { width: 3px; height: 16px; flex: none; margin: 0 7px 0 4px; background: repeating-linear-gradient(180deg, #111 0 3px, transparent 3px 5px); }
.w3bar .vs { margin: 0 7px 0 -3px; }
.w3bar .vs.wide { margin: 0 8px 0 -1px; }
.w3bar .caret { margin-left: 6px; }
.m6 { margin-right: 6px; }
.m8 { margin-right: 8px; }
.m9 { margin-right: 9px; }
.m10 { margin-right: 10px; }
.m13 { margin-right: 13px; }
.thick { width: 2px; height: 27px; flex: none; background: #c8c8cc; margin-left: -4px; }
.thick + .grip { margin-right: 5px; }
.w3main { height: 413px; flex: none; display: flex; }
.vtools { width: 43px; flex: none; background: #fff; border-right: 1px solid #c0c0c0; display: flex; flex-direction: column; align-items: flex-start; padding: 7px 0 0 4px; }
.hgrip { width: 27px; height: 3px; flex: none; margin-bottom: 3px; background: repeating-linear-gradient(90deg, #111 0 3px, transparent 3px 5px); }
.vt { width: 27px; height: 27px; flex: none; display: flex; align-items: center; justify-content: center; border-radius: 4px; position: relative; }
.vt.on { background: #c5daf0; height: 23px; margin: 2px 0; }
.caret.abs { position: absolute; left: 28px; top: 12px; margin: 0; }
.canvas3 { flex: 1; background: #000; position: relative; overflow: hidden; }
.gr { stroke: #6b2f35; fill: none; shape-rendering: crispEdges; }
.dm { stroke: #6e6e6e; fill: none; shape-rendering: crispEdges; }
.dmt { stroke: #6e6e6e; fill: none; }
.lbl3 text { fill: #e6e6e6; font: 15.500px "Liberation Sans", sans-serif; }
.rx { stroke: #e00000; fill: none; stroke-width: 1.200; }
.pl { stroke: #fff; fill: none; stroke-width: 1; shape-rendering: crispEdges; }
.yl rect { fill: #ffff00; }
.sq rect { fill: #8c8c8c; }
.sqi rect { fill: #d2d2d2; }
.sb1 { stroke: #4a90e2; fill: none; }
.sw { stroke: #eee; fill: none; }
.axy { fill: #00e000; font: 12px "Liberation Sans", sans-serif; }
.axx { fill: #ff0000; font: 15px "Liberation Sans", sans-serif; }
.w3status { flex: 1; background: #dcdcde; display: flex; align-items: center; position: relative; }
.coord { margin-left: 2px; width: 156px; white-space: nowrap; }
.zero { width: 66px; }
.st { height: 25px; background: #d5e6fa; border: 1px solid #5a9fe8; border-radius: 3px; display: flex; align-items: center; justify-content: flex-start; padding-left: 3px; margin-right: 6px; flex: none; }
.st .caret { margin-left: 3px; border-top-color: #555; }
.w35 { width: 36px; }
.w25 { width: 25px; padding-left: 3px; }
.plain { background: #fff; border-color: #aaa; }
.tip { margin-left: 1px; white-space: nowrap; }
.ok { position: absolute; left: 773px; top: 6px; width: 30px; height: 26px; background: #2a7de1; border-radius: 3px; }

.mark { position: absolute; inset: 0; width: 1678px; height: 809px; pointer-events: none; }
.mark ellipse, .mark circle { fill: none; stroke: #f53c3c; stroke-width: 6; }
.mark polygon { fill: #f53c3c; }
```
